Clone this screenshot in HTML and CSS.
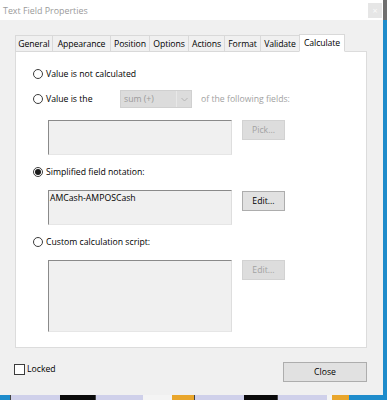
FILE: index.html
```html
<!DOCTYPE html>
<html>
<head>
<meta charset="utf-8">
<link rel="stylesheet" href="styles.css">
</head>
<body>
<div class="screen">
  <div class="main">
    <div class="dialog">
      <div class="titlebar">
        <span class="title">Text Field Properties</span>
        <span class="xbtn">×</span>
      </div>
      <div class="body">
        <div class="tabs">
          <div class="tab w-general">General</div>
          <div class="tab w-appearance">Appearance</div>
          <div class="tab w-position">Position</div>
          <div class="tab w-options">Options</div>
          <div class="tab w-actions">Actions</div>
          <div class="tab w-format">Format</div>
          <div class="tab w-validate">Validate</div>
          <div class="tab active w-calculate">Calculate</div>
        </div>
        <div class="panel">
          <div class="radio-row r1">
            <span class="radio"></span><span class="label">Value is not calculated</span>
          </div>
          <div class="radio-row r2">
            <span class="radio"></span><span class="label fixed">Value is the</span>
            <span class="select"><span class="sel-text">sum (+)</span><span class="sel-arrow"><svg width="7" height="5" viewBox="0 0 7 5"><path d="M0.5 1 L3.5 4 L6.5 1" fill="none" stroke="#b4b4b4" stroke-width="1"/></svg></span></span>
            <span class="label disabled of">of the following fields:</span>
          </div>
          <div class="field-row g1">
            <div class="area"></div>
            <div class="btn disabled">Pick...</div>
          </div>
          <div class="radio-row r3">
            <span class="radio checked"></span><span class="label">Simplified field notation:</span>
          </div>
          <div class="field-row g2">
            <div class="area">AMCash-AMPOSCash</div>
            <div class="btn enabled">Edit...</div>
          </div>
          <div class="radio-row r4">
            <span class="radio"></span><span class="label">Custom calculation script:</span>
          </div>
          <div class="field-row g3">
            <div class="area tall"></div>
            <div class="btn disabled">Edit...</div>
          </div>
        </div>
        <div class="footer">
          <div class="check-row"><span class="checkbox"></span><span class="label">Locked</span></div>
          <div class="btn enabled close">Close</div>
        </div>
      </div>
    </div>
    <div class="edge">
      <span class="edge-top"></span>
    </div>
  </div>
  <div class="taskbar">
    <span class="seg blue s10"></span>
    <span class="seg lav s50"></span>
    <span class="seg black s35"></span>
    <span class="seg lav s48"></span>
    <span class="seg white s29"></span>
    <span class="seg orange s22"></span>
    <span class="seg lav s50"></span>
    <span class="seg black s33"></span>
    <span class="seg lav s50"></span>
    <span class="seg white s5"></span>
    <span class="seg orange s17"></span>
    <span class="seg blue sfill"></span>
  </div>
</div>
</body>
</html>
```

FILE: styles.css
```css
* { box-sizing: border-box; }
html, body { margin: 0; padding: 0; }
body {
  width: 387px;
  height: 400px;
  overflow: hidden;
  background: #1f8ccb;
  font-family: "Open Sans", "Noto Sans", sans-serif;
  font-size: 8.7px;
  color: #000;
}
.screen { width: 387px; height: 400px; display: flex; flex-direction: column; }
.main { display: flex; height: 395px; }
.dialog { width: 383px; height: 395px; display: flex; flex-direction: column; background: #f0f0f0; }
.edge { width: 4px; background: #1f8ccb; display: flex; flex-direction: column; }
.edge-top { height: 20px; background: #6f6f6f; }

.titlebar {
  height: 20px;
  background: #ffffff;
  display: flex;
  align-items: center;
  justify-content: space-between;
  padding-left: 3px;
  padding-right: 1px;
}
.title { color: #9a9a9a; font-size: 8.9px; }
.xbtn {
  width: 14px; height: 15px;
  background: #e6e6e6;
  color: #fafafa;
  font-size: 9px;
  display: flex; align-items: center; justify-content: center;
  margin-top: 1px;
}

.body { flex: 1; padding: 14px 16px 0 15px; display: flex; flex-direction: column; }

.tabs { display: flex; align-items: flex-end; height: 18px; margin-bottom: -1px; position: relative; z-index: 1; }
.tab {
  height: 17px;
  border: 1px solid #d9d9d9;
  margin-left: -1px;
  background: #f0f0f0;
  display: flex; align-items: center; justify-content: center;
  white-space: nowrap;
  letter-spacing: -0.1px;
}
.tab:first-child { margin-left: 0; }
.tab.active { height: 18px; background: #ffffff; border-bottom-color: #ffffff; }
.w-general { width: 38px; }
.w-appearance { width: 59px; }
.w-position { width: 40px; }
.w-options { width: 40px; }
.w-actions { width: 37px; }
.w-format { width: 37px; }
.w-validate { width: 40px; }
.w-calculate { width: 46px; }

.panel {
  width: 352px;
  height: 297px;
  background: #ffffff;
  border: 1px solid #dcdcdc;
  padding: 15px 0 0 17px;
  display: flex; flex-direction: column;
}
.radio-row { display: flex; align-items: center; height: 14px; }
.radio {
  width: 10px; height: 10px;
  border: 1px solid #3c3c3c;
  border-radius: 50%;
  background: #fff;
  margin-right: 3px;
  display: flex; align-items: center; justify-content: center;
}
.radio.checked::after {
  content: "";
  width: 6px; height: 6px; border-radius: 50%;
  background: #1a1a1a;
}
.label { white-space: nowrap; }
.label.fixed { width: 74px; }
.disabled { color: #a2a2a2; }
.r2 { height: 18px; margin-top: 9px; }
.r3 { margin-top: 10px; }
.r4 { margin-top: 10px; }
.select {
  width: 72px; height: 18px;
  background: #dcdcdc;
  border: 1px solid #d0d0d0;
  display: flex; align-items: center;
  color: #9a9a9a;
}
.sel-text { flex: 1; padding-left: 3px; }
.sel-arrow { width: 15px; height: 100%; border-left: 1px solid #e8e8e8; display: flex; align-items: center; justify-content: center; }
.of { margin-left: 9px; }

.field-row { display: flex; align-items: flex-start; padding-left: 15px; gap: 10px; }
.g1 { margin-top: 12px; }
.g2 { margin-top: 11px; }
.g3 { margin-top: 11px; }
.area {
  width: 184px; height: 35px;
  background: #f0f0f0;
  border-style: solid; border-width: 1px;
  border-color: #8a8a8a #dedede #e6e6e6 #8a8a8a;
  padding: 1px 0 0 1px;
  color: #000;
}
.area.tall { height: 72px; }
.btn {
  width: 43px; height: 20px;
  display: flex; align-items: center; justify-content: center;
}
.btn.enabled { background: #e1e1e1; border: 1px solid #adadad; color: #000; }
.btn.disabled { background: #dddddd; border: 1px solid #d2d2d2; color: #a2a2a2; }
.g2 .btn { margin-top: 1px; }

.footer { display: flex; justify-content: space-between; align-items: flex-start; margin-top: 14px; height: 20px; }
.check-row { display: flex; align-items: center; margin-left: -1px; margin-top: 1px; }
.checkbox { width: 11px; height: 11px; border: 1px solid #3c3c3c; background: #fff; margin-right: 2px; }
.btn.close { width: 84px; height: 20px; }

.taskbar { display: flex; height: 5px; }
.seg { height: 5px; }
.blue { background: #1f8ccb; }
.lav { background: #cfd0ea; border-left: 1px solid #444; }
.black { background: #0a0a0a; }
.white { background: #f4f4f4; }
.orange { background: #e9a62c; }
.s10 { width: 10px; } .s50 { width: 50px; } .s35 { width: 35px; } .s48 { width: 48px; }
.s29 { width: 29px; } .s22 { width: 22px; } .s33 { width: 33px; } .s5 { width: 5px; } .s17 { width: 17px; }
.sfill { flex: 1; }
```
